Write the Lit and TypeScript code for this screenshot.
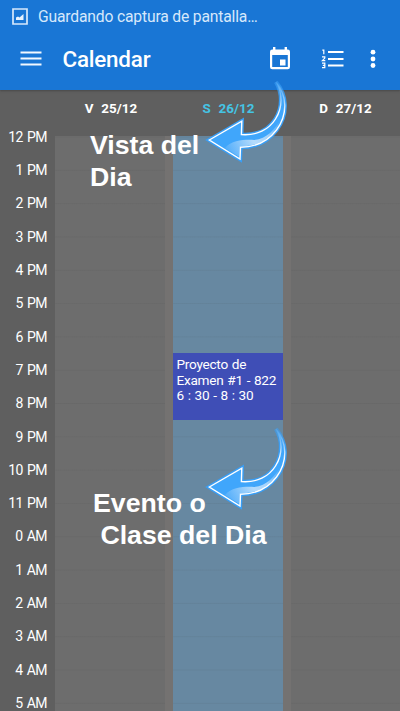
import { LitElement, html, css, svg } from "lit";
import { customElement } from "lit/decorators.js";

const HOURS = ["12 PM", "1 PM", "2 PM", "3 PM", "4 PM", "5 PM", "6 PM", "7 PM", "8 PM", "9 PM", "10 PM", "11 PM", "0 AM", "1 AM", "2 AM", "3 AM", "4 AM", "5 AM"];

@customElement("curved-arrow")
export class CurvedArrow extends LitElement {
  static styles = css`
    :host { display: block; width: 84px; height: 88px; }
    svg { display: block; overflow: visible; }
  `;
  render() {
    const d = "M3.3 62 L35.8 43.2 L35.4 56.6 C51 57.8 63 51.5 69.5 41 C77 29 76.500 15 70 4 C81 17 82.2 36 70.5 52 C61 64.5 49 69.2 34.5 69.2 L34 81 Z";
    return html`<svg width="84" height="88" viewBox="0 0 84 88">
      <defs>
        <linearGradient id="shine" gradientUnits="userSpaceOnUse" x1="22" y1="72" x2="74" y2="44">
          <stop offset="0" stop-color="#58b0fa"></stop><stop offset=".45" stop-color="#b4dbfc"></stop><stop offset=".7" stop-color="#a5d3fb"></stop><stop offset="1" stop-color="#43a8fb"></stop>
        </linearGradient>
        <linearGradient id="edge" gradientUnits="userSpaceOnUse" x1="0" y1="4" x2="0" y2="34">
          <stop offset="0" stop-color="#7cc0f8" stop-opacity=".2"></stop><stop offset="1" stop-color="#fff"></stop>
        </linearGradient>
        <linearGradient id="halo" gradientUnits="userSpaceOnUse" x1="0" y1="2" x2="0" y2="22">
          <stop offset="0" stop-color="#389ef6" stop-opacity=".5"></stop><stop offset="1" stop-color="#389ef6"></stop>
        </linearGradient>
      </defs>
      ${svg`<path d=${d} fill="none" stroke="url(#halo)" stroke-width="4.2"></path>
      <path d=${d} fill="#40a6fb"></path>
      <path d="M19 70 C26 62 39 61.500 48 62 C61 61 69 51 75 41 C69 58 55 68.500 34 68.500 L33.500 79 Z" fill="url(#shine)"></path>
      <path d=${d} fill="none" stroke="url(#edge)" stroke-width="1.4"></path>`}
    </svg>`;
  }
}

@customElement("app-root")
export class AppRoot extends LitElement {
  static styles = css`
    :host {
      display: block; position: relative; width: 400px; height: 711px; overflow: hidden;
      background: #5f5f5f; color: #fff; font-family: Roboto, sans-serif;
    }
    .top { height: 90px; background: #1976d5; box-shadow: 0 1px 2px #484848; position: relative; }
    .status { height: 33px; display: flex; align-items: center; padding-left: 12px; gap: 10px; font-size: 15.7px; letter-spacing: -.18px; color: #d6e8fb; box-sizing: border-box; white-space: nowrap; }
    .status svg { flex: none; }
    .bar { height: 52px; display: flex; align-items: center; padding-left: 20px; }
    .bar svg { display: block; flex: none; }
    h1 { margin: 0 0 0 20.5px; width: 206.5px; font-size: 22.4px; letter-spacing: -.2px; font-weight: 500; line-height: 28px; }
    .list { margin-left: 30px; }
    .more { margin-left: 25px; }
    .days { height: 46px; display: grid; grid-template-columns: 110px 109px 109px; column-gap: 8px; padding-left: 56px; box-sizing: border-box; }
    .day { text-align: center; font-weight: 700; font-size: 13.4px; line-height: 37px; letter-spacing: .05px; word-spacing: .5px; white-space: pre; }
    .today { color: #45c4e4; }
    .body { display: flex; height: 575px; }
    .hours { width: 47px; margin-right: 8px; text-align: right; font-size: 14px; letter-spacing: -.5px; word-spacing: 1px; }
    .hour { height: 33.32px; line-height: 17px; position: relative; top: -7.3px; white-space: nowrap; }
    .grid { width: 345px; display: grid; grid-template-columns: 109.5px 109.5px 109.5px; column-gap: 8.5px; background: #747271; }
    .col { background: linear-gradient(to bottom, transparent 32.32px, rgba(50, 50, 50, .07) 32.32px) 0 1.5px / 100% 33.32px, #6d6d6d; }
    .col.now { background-color: #6788a1; padding-top: 217px; }
    .event { height: 67px; box-sizing: border-box; background: #3f4eb6; padding: 4px 3.5px; font-size: 13.6px; letter-spacing: -.25px; word-spacing: .7px; line-height: 15.6px; white-space: nowrap; }
    .note { position: absolute; font: 700 26.7px/32px "Liberation Sans", Arial, sans-serif; white-space: pre; }
    .n1 { left: 90px; top: 129px; }
    .n2 { left: 93px; top: 487px; }
    curved-arrow { position: absolute; left: 206px; }
    .a1 { top: 78px; }
    .a2 { top: 425px; }
  `;
  render() {
    return html`
      <header class="top">
        <div class="status">
          <svg width="16" height="17" viewBox="0 0 16 17"><path d="M1 1h14v15H1z" fill="none" stroke="#d6e8fb" stroke-width="1.7"></path><path d="M4 12V9.5l2-1 1.5 1L11.5 6v6z" fill="#e5f1fd"></path></svg>
          <span>Guardando captura de pantalla…</span>
        </div>
        <div class="bar">
          <svg width="22" height="16" viewBox="0 0 22 16"><path d="M.5 1.500h21M.5 7.500h21M.5 13.500h21" stroke="#f2f8ff" stroke-width="1.900"></path></svg>
          <h1>Calendar</h1>
          <svg width="22" height="24" viewBox="0 0 22 24"><path fill="#fff" fill-rule="evenodd" d="M4 0h2.400v2.400h9.200V0H18v2.400h.700A2.300 2.300 0 0 1 21 4.700V20a2.300 2.300 0 0 1-2.300 2.300H3.300A2.300 2.300 0 0 1 1 20V4.700a2.300 2.300 0 0 1 2.300-2.300H4zM3.200 8V20h15.600V8zM11 12.500h5.500V18.500H11z"></path></svg>
          <svg class="list" width="23" height="20" viewBox="0 0 23 20"><path d="M7 3h15.500M7 10h15.500M7 16.500h15.500" stroke="#fff" stroke-width="2.100"></path><path d="M1.300 1.200h1.500v4M1 7.900h2.800v1.200L1.300 11.700H4.300M1 14.200h2.800v4.500H1M1.800 16.400H4" fill="none" stroke="#fff" stroke-width="1.200"></path></svg>
          <svg class="more" width="8" height="20" viewBox="0 0 8 20"><g fill="#fff"><circle cx="4" cy="3.200" r="2.400"></circle><circle cx="4" cy="10" r="2.400"></circle><circle cx="4" cy="16.500" r="2.400"></circle></g></svg>
        </div>
      </header>
      <div class="days">
        <div class="day">V  25/12</div><div class="day today">S  26/12</div><div class="day">D  27/12</div>
      </div>
      <main class="body">
        <div class="hours">${HOURS.map((h) => html`<div class="hour">${h}</div>`)}</div>
        <div class="grid">
          <div class="col"></div>
          <div class="col now"><div class="event">Proyecto de<br>Examen #1 - 822<br>6 : 30 - 8 : 30</div></div>
          <div class="col"></div>
        </div>
      </main>
      <div class="note n1">Vista del<br>Dia</div>
      <div class="note n2">Evento o<br> Clase del Dia</div>
      <curved-arrow class="a1"></curved-arrow>
      <curved-arrow class="a2"></curved-arrow>
    `;
  }
}
